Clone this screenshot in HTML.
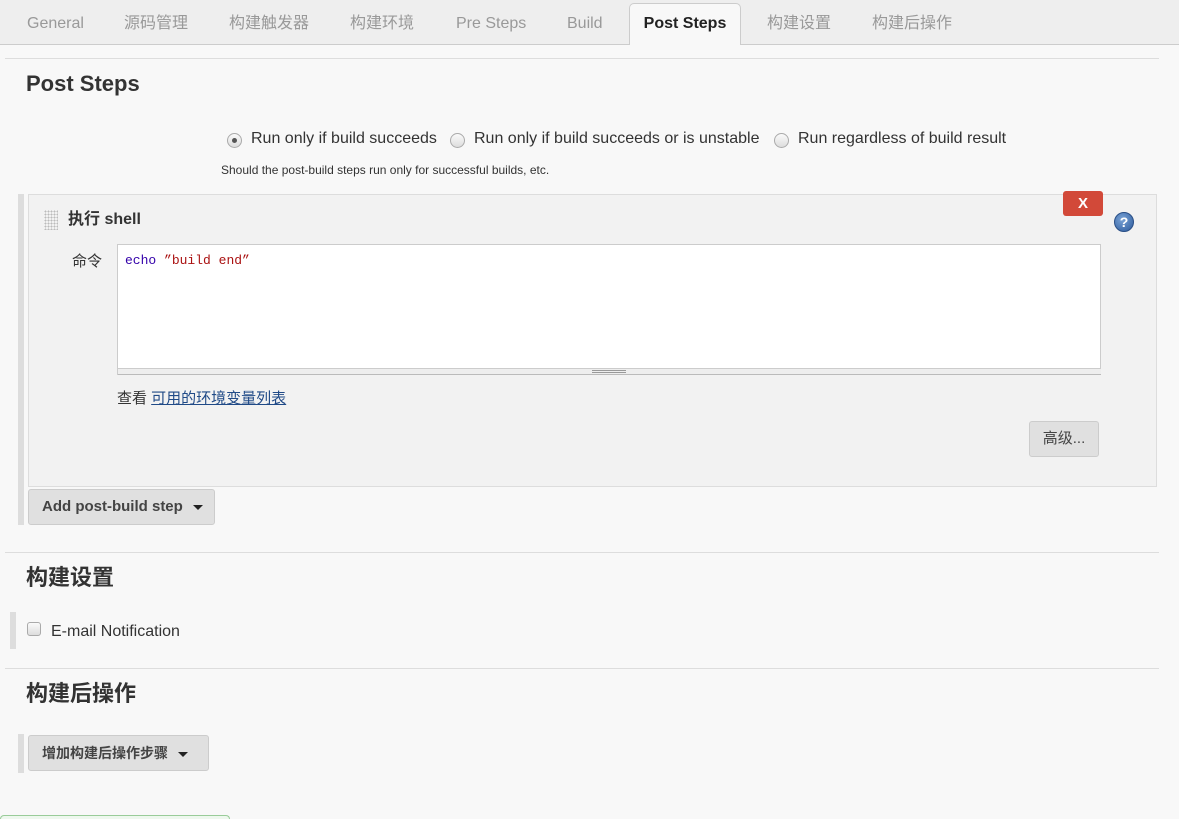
<!DOCTYPE html>
<html><head><meta charset="utf-8"><style>
*{box-sizing:border-box;margin:0;padding:0}
html,body{width:1179px;height:819px;overflow:hidden}
body{background:#f8f8f8;font-family:"Liberation Sans","Noto Sans CJK SC",sans-serif;color:#333;position:relative}
.a{position:absolute;white-space:nowrap}
.tabs{left:0;top:0;width:1179px;height:45px;background:#eeeeee;border-bottom:1px solid #ccc}
.tab{position:absolute;top:14px;font-size:16px;line-height:20px;height:20px;color:#999}
.act{position:absolute;left:629px;top:3px;width:112px;height:42px;background:#f8f8f8;border:1px solid #ccc;border-bottom:none;border-radius:5px 5px 0 0;font-weight:bold;color:#222;font-size:16px;text-align:center;line-height:40px}
.hr{height:1px;background:#ddd;left:5px;width:1154px}
h2{position:absolute;font-size:22px;line-height:26px;font-weight:bold;color:#333}
.radio{position:absolute;width:15px;height:15px;border-radius:50%;border:1px solid #aaa;background:linear-gradient(#fafafa,#ddd)}
.btn{position:absolute;background:#e0e0e0;border:1px solid #ccc;border-radius:3px;font-size:15px;font-weight:bold;color:#444}
.caret{display:inline-block;width:0;height:0;border-left:5px solid transparent;border-right:5px solid transparent;border-top:5px solid #222;vertical-align:middle;margin-left:10px}
.t{line-height:20px;font-size:16px}
</style></head><body>
<div class="a tabs">
<span class="tab" style="left:27px">General</span>
<span class="tab" style="left:124px">源码管理</span>
<span class="tab" style="left:229px">构建触发器</span>
<span class="tab" style="left:350px">构建环境</span>
<span class="tab" style="left:456px">Pre Steps</span>
<span class="tab" style="left:567px">Build</span>
<div class="act">Post Steps</div>
<span class="tab" style="left:767px">构建设置</span>
<span class="tab" style="left:872px">构建后操作</span>
</div>
<div class="a hr" style="top:58px"></div>
<h2 style="left:26px;top:71px">Post Steps</h2>

<div class="radio" style="left:227px;top:133px"><div style="position:absolute;left:4px;top:4px;width:5px;height:5px;border-radius:50%;background:#555"></div></div>
<span class="a t" style="left:251px;top:129px">Run only if build succeeds</span>
<div class="radio" style="left:450px;top:133px"></div>
<span class="a t" style="left:474px;top:129px">Run only if build succeeds or is unstable</span>
<div class="radio" style="left:774px;top:133px"></div>
<span class="a t" style="left:798px;top:129px">Run regardless of build result</span>
<span class="a" style="left:221px;top:163px;font-size:12px;line-height:14px">Should the post-build steps run only for successful builds, etc.</span>

<div class="a" style="left:18px;top:194px;width:6px;height:331px;background:#ddd"></div>
<div class="a" style="left:28px;top:194px;width:1129px;height:293px;background:#f2f2f2;border:1px solid #ddd"></div>
<div class="a" style="left:44px;top:210px;width:14px;height:20px;background-image:radial-gradient(#bbb 0.8px,transparent 1px);background-size:3px 3px"></div>
<span class="a t" style="left:68px;top:210px;font-weight:bold">执行 shell</span>
<div class="a" style="left:1063px;top:191px;width:40px;height:25px;background:#d24939;border-radius:3px;color:#fff;font-weight:bold;font-size:15px;text-align:center;line-height:25px">X</div>
<div class="a" style="left:1114px;top:212px;width:20px;height:20px;border-radius:50%;background:radial-gradient(circle at 40% 35%,#7aa3d6,#2c5a9c);border:1px solid #2a4f86;color:#fff;font-weight:bold;font-size:14px;text-align:center;line-height:18px">?</div>
<span class="a" style="left:72px;top:252px;font-size:15px;line-height:20px">命令</span>
<div class="a" style="left:117px;top:244px;width:984px;height:131px;background:#fff;border:1px solid #ccc"></div>
<div class="a" style="left:118px;top:368px;width:983px;height:7px;background:#eee;border-top:1px solid #ccc;border-bottom:1px solid #bbb"></div>
<div class="a" style="left:592px;top:370px;width:34px;height:3px;border-top:1px solid #999;border-bottom:1px solid #999"></div>
<span class="a" style="left:125px;top:252px;font-family:'Liberation Mono',monospace;font-size:13px;line-height:18px"><span style="color:#3300aa">echo</span> <span style="color:#aa1111">”build end”</span></span>
<span class="a" style="left:117px;top:389px;font-size:15px;line-height:20px">查看 <span style="color:#204a87;text-decoration:underline">可用的环境变量列表</span></span>
<div class="btn" style="left:1029px;top:421px;width:70px;height:36px;font-weight:normal;text-align:center;line-height:34px">高级...</div>

<div class="btn" style="left:28px;top:489px;width:187px;height:36px;line-height:34px;padding-left:13px">Add post-build step<span class="caret"></span></div>

<div class="a hr" style="top:552px"></div>
<h2 style="left:26px;top:565px">构建设置</h2>
<div class="a" style="left:10px;top:612px;width:6px;height:37px;background:#ddd"></div>
<div class="a" style="left:27px;top:622px;width:14px;height:14px;border:1px solid #aaa;border-radius:3px;background:linear-gradient(#fafafa,#ddd)"></div>
<span class="a t" style="left:51px;top:622px">E-mail Notification</span>

<div class="a hr" style="top:668px"></div>
<h2 style="left:26px;top:681px">构建后操作</h2>
<div class="a" style="left:18px;top:734px;width:6px;height:39px;background:#ddd"></div>
<div class="btn" style="left:28px;top:735px;width:181px;height:36px;line-height:34px;padding-left:13px;font-size:14px">增加构建后操作步骤<span class="caret"></span></div>

<div class="a" style="left:0;top:815px;width:230px;height:4px;border:1px solid #9c9;border-bottom:none;border-radius:8px 8px 0 0;background:#eef8ee"></div>
</body></html>
